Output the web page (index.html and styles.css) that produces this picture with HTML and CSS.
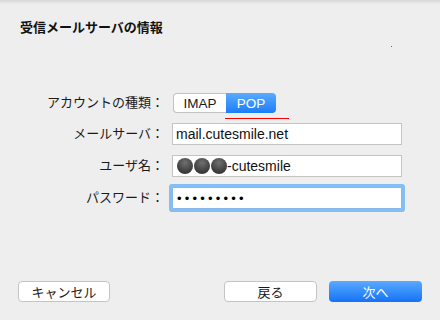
FILE: index.html
```html
<!DOCTYPE html>
<html lang="ja">
<head>
    <meta charset="UTF-8">
    <title>受信メールサーバの情報</title>
    <link rel="stylesheet" href="styles.css">
</head>
<body>

    <div class="ventana">
        <div class="barra"></div>
        <h1 class="titulo">受信メールサーバの情報</h1>
        <span class="punto"></span>

        <div class="formulario">
            <label>アカウントの種類：</label>
            <div class="segmento">
                <button class="seg">IMAP</button>
                <button class="seg activo">POP</button>
                <span class="subrayado"></span>
            </div>

            <label>メールサーバ：</label>
            <div class="campo">mail.cutesmile.net</div>

            <label>ユーザ名：</label>
            <div class="campo"><span class="bola"></span><span class="bola"></span><span class="bola"></span>-cutesmile</div>

            <label>パスワード：</label>
            <div class="campo foco"><span class="clave">•••••••••</span></div>
        </div>

        <div class="pie">
            <button class="boton">キャンセル</button>
            <button class="boton atras">戻る</button>
            <button class="boton primario">次へ</button>
        </div>
    </div>

</body>
</html>
```

FILE: styles.css
```css
body {
    margin: 0;
    background-color: #eeeeee;
    font-family: "Liberation Sans", "Noto Sans CJK JP", sans-serif;
    font-size: 13px;
    color: #1a1a1a;
}
.ventana {
    position: relative;
    width: 440px;
    height: 320px;
    display: flex;
    flex-direction: column;
}
.barra {
    height: 4px;
    background: linear-gradient(#d6d6d6, #eeeeee);
}
.titulo {
    margin: 16px 0 0 20px;
    font-size: 13px;
    line-height: 16px;
    font-weight: bold;
    color: #111;
}
.punto {
    position: absolute;
    left: 391px;
    top: 46px;
    width: 1px;
    height: 1px;
    background: #e0303a;
}
.formulario {
    margin-top: 57px;
    display: grid;
    grid-template-columns: 164px 230px;
    grid-template-rows: 20px 22px 22px 22px;
    column-gap: 8px;
    row-gap: 10px;
    align-items: center;
}
.formulario label {
    text-align: right;
    line-height: 16px;
}
.segmento {
    position: relative;
    display: flex;
    align-self: start;
    margin-left: 1px;
    margin-bottom: 1px;
}
.seg {
    height: 20px;
    padding: 0;
    font-family: inherit;
    font-size: 13.5px;
    border: 1px solid #c2c2c2;
    background: #ffffff;
    color: #1a1a1a;
}
.seg:first-child {
    width: 53px;
    border-radius: 4px 0 0 4px;
    border-right: none;
}
.seg.activo {
    width: 50px;
    border: none;
    border-radius: 0 4px 4px 0;
    background: linear-gradient(#5aaaff, #1b7ef7);
    color: #fff;
}
.subrayado {
    position: absolute;
    left: 52px;
    top: 25px;
    width: 64px;
    height: 1px;
    background: #ff0000;
}
.campo {
    height: 22px;
    box-sizing: border-box;
    border: 1px solid #c4c4c4;
    background: #fff;
    padding: 0 3px;
    display: flex;
    align-items: center;
    font-size: 14px;
    color: #111;
}
.bola {
    width: 16px;
    height: 16px;
    margin-left: 1px;
    border-radius: 50%;
    background: radial-gradient(circle at 50% 30%, #707070, #3a3a3a 70%);
}
.foco {
    border-color: #8ab8e8;
    box-shadow: 0 0 0 3px #83bff5;
    border-radius: 1px;
}
.clave {
    letter-spacing: 3.2px;
    font-size: 13px;
    color: #000;
    margin-left: 1px;
}
.pie {
    margin-top: auto;
    padding: 0 18px 18px 18px;
    display: flex;
}
.boton {
    width: 92px;
    height: 21px;
    padding: 0;
    font-family: "Noto Sans CJK JP", sans-serif;
    font-size: 13px;
    border: 1px solid #c4c4c4;
    border-radius: 4px;
    background: #fff;
    color: #1a1a1a;
}
.atras {
    width: 93px;
    margin-left: auto;
}
.primario {
    width: 93px;
    margin-left: 12px;
    border: none;
    background: linear-gradient(#5aaaff, #1572f6);
    color: #fff;
}
```
